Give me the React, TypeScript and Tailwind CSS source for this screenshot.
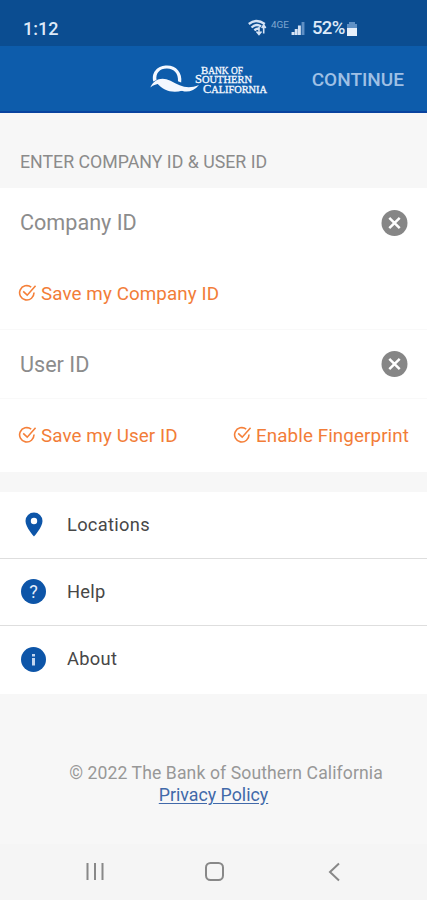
import React from "react";

function CheckMark() {
  return (
    <svg className="-mt-0.5 h-[18px] w-[18px] shrink-0" viewBox="0 0 18 18" fill="none" stroke="#f5803a" strokeWidth="1.6">
      <path d="M13.200 3.100A7.200 7.200 0 1 0 16 8.500" />
      <path d="M5.200 7.400l4 3.800L17.600 1.800" />
    </svg>
  );
}

function Clear() {
  return (
    <svg className="h-[27px] w-[27px] shrink-0" viewBox="0 0 27 27">
      <circle cx="13.5" cy="13" r="13" fill="#868686" />
      <path d="M8.300 7.800l10.400 10.400M18.700 7.800L8.300 18.200" stroke="#fff" strokeWidth="2.500" />
    </svg>
  );
}

function Logo() {
  return (
    <svg className="h-[40px] w-[124px]" viewBox="0 0 124 40" fill="#f4f8ff">
      <path d="M3.300 22.500C1 12 9 6.500 17 6.500c9.500 0 15.500 7.500 14.200 17l-3.200-1.200C28.500 14.500 24 9.700 17 9.500 10 9.300 5.500 14 6.500 21z" />
      <path d="M.3 28.500C4 20 12 17.500 20.500 21.800c9.500 5 16.500 9.200 28.500 4.200-6 7.300-13 8-20.500 4.800C18 26 9 21 .3 28.500z" />
      <path d="M7 24.200c6 7 15 10.500 25.500 7.300C26 25.800 16 21.500 7 24.200z" />
      <g fontFamily="Liberation Serif, serif" stroke="#f4f8ff" strokeWidth=".3">
        <text x="51" y="15" fontSize="11" textLength="42" lengthAdjust="spacingAndGlyphs">B<tspan fontSize="9.500">ANK OF</tspan></text>
        <text x="45" y="24.200" fontSize="12" textLength="57" lengthAdjust="spacingAndGlyphs">S<tspan fontSize="10">OUTHERN</tspan></text>
        <text x="53" y="33.500" fontSize="12" textLength="64" lengthAdjust="spacingAndGlyphs">C<tspan fontSize="10">ALIFORNIA</tspan></text>
      </g>
    </svg>
  );
}

function StatusIcons() {
  return (
    <svg className="-mt-1 h-[20px] w-[60px]" viewBox="0 0 60 20" fill="none" stroke="#d5e3f5">
      <path d="M.8 7q7.500-6 16 0M3.500 10.500q5-4.500 9.500-1M6.500 13.500q2-2.500 4.500-1.500" strokeWidth="2.300" />
      <path d="M11 17.500V10m-2.500 4.500l2.500 3 2.500-3M15.700 8.500v8m-2-5.500l2-3 2 3" strokeWidth="1.600" />
      <text x="23" y="10.500" fontSize="8.500" textLength="18" lengthAdjust="spacingAndGlyphs" fill="#7fa6d0" stroke="none" fontFamily="Roboto, sans-serif">4GE</text>
      <path d="M45 18v-3M48.200 18v-6M51.400 18V8.500" strokeWidth="2.900" />
      <path d="M55 18V5" strokeWidth="2.900" stroke="#5f8fc4" />
    </svg>
  );
}

function SaveOption({ label }: { label: string }) {
  return (
    <div className="flex items-center gap-[5px]">
      <CheckMark />
      <span className="text-[18.8px] leading-6 tracking-[0.1px] whitespace-nowrap">{label}</span>
    </div>
  );
}

function Row({ label, children }: { label: string; children: React.ReactNode }) {
  return (
    <div className="flex h-[67px] items-center pb-px">
      <div className="flex w-[67px] justify-center">{children}</div>
      <span className="text-[18.3px] tracking-[0.3px] text-[#474747]">{label}</span>
    </div>
  );
}

export default function App() {
  return (
    <div className="flex h-[900px] w-[427px] flex-col overflow-hidden bg-[#f7f7f7] font-[Roboto,sans-serif]">
      <div className="flex h-[46px] items-center bg-[#0b4d91] pt-[11px] pl-[23px] text-[#dde9f8]">
        <span className="w-[225px] text-[18px] font-medium">1:12</span>
        <StatusIcons />
        <span className="ml-1 w-[34px] text-[18.5px] font-medium tracking-[-0.7px]">52%</span>
        <svg className="h-4 w-3" viewBox="0 0 12 16">
          <path d="M3 1h6v2h2v4H1V3h2z" fill="#5f91c6" />
          <path d="M1 7h10v8H1z" fill="#e6effa" />
        </svg>
      </div>
      <header className="flex h-[67px] items-center justify-between border-b-2 border-[#09439f] bg-[#0d5cab] pr-[23px] pl-[150px]">
        <Logo />
        <span className="mt-[3px] text-[19px] font-medium text-[#9fc0e5]">CONTINUE</span>
      </header>
      <div className="flex h-[75px] items-center pt-[23px] pl-5 text-[17.75px] text-[#8b8b8b]">ENTER COMPANY ID &amp; USER ID</div>
      <section className="flex h-[284px] flex-col bg-white text-[#f27d38]">
        <div className="flex h-[69px] items-center justify-between pt-px pr-[19px] pl-5 text-[21.6px] text-[#8c8c8c]"><span className="mt-px">Company ID</span><Clear /></div>
        <div className="flex h-[73px] items-center border-b border-[#f9f9f9] pt-[2px] pl-[18px]"><SaveOption label="Save my Company ID" /></div>
        <div className="flex h-[69px] items-center justify-between border-b border-[#f9f9f9] pt-px pr-[19px] pl-5 text-[21.6px] text-[#8c8c8c]"><span className="mt-[2px]">User ID</span><Clear /></div>
        <div className="flex h-[73px] items-center justify-between pt-px pr-[18px] pl-[18px]">
          <SaveOption label="Save my User ID" />
          <SaveOption label="Enable Fingerprint" />
        </div>
      </section>
      <section className="mt-5 flex h-[202px] flex-col divide-y divide-[#dedede] bg-white">
        <Row label="Locations">
          <svg className="h-[25px] w-[18px]" viewBox="0 0 18 25"><path fillRule="evenodd" d="M9 .5a8.500 8.500 0 0 0-8.500 8.500C.5 15.200 9 24.500 9 24.500S17.500 15.200 17.500 9A8.500 8.500 0 0 0 9 .5zm0 5.300a3.200 3.200 0 1 1 0 6.400 3.200 3.200 0 0 1 0-6.400z" fill="#0d55a8" /></svg>
        </Row>
        <Row label="Help">
          <span className="flex h-[25px] w-[25px] items-center justify-center rounded-full bg-[#0d55a8] text-[18px] text-[#e5eefb]">?</span>
        </Row>
        <Row label="About">
          <svg className="h-[25px] w-[25px]" viewBox="0 0 25 25"><circle cx="12.500" cy="12.500" r="12.500" fill="#0d55a8" /><path d="M11 7h3v2.500h-3zM11 11h3v7.500h-3z" fill="#c4d6ef" /></svg>
        </Row>
      </section>
      <footer className="flex h-[150px] flex-col items-center pt-[69px] text-[17.6px] leading-[21px]">
        <span className="ml-[25px] tracking-[0.1px] text-[#989898]">© 2022 The Bank of Southern California</span>
        <span className="text-[17.8px] text-[#4169a9] underline underline-offset-2">Privacy Policy</span>
      </footer>
      <nav className="h-[56px] bg-[#f5f5f5]">
        <svg className="h-[56px] w-[427px]" viewBox="0 0 427 56" fill="none" stroke="#888" strokeWidth="2">
          <path d="M87.500 19v17M95 19v17M102.500 19v17" />
          <rect x="206" y="19" width="17" height="17" rx="4.500" />
          <path d="M339 19.500l-9 8.500 9 8.500" />
        </svg>
      </nav>
    </div>
  );
}
